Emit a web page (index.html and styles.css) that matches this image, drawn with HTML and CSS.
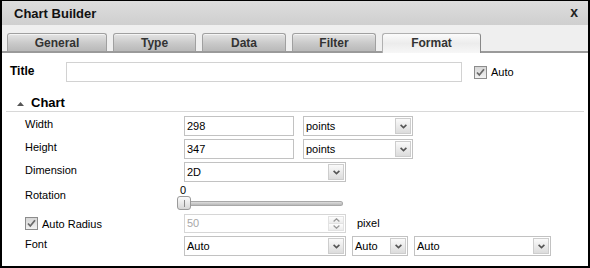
FILE: index.html
```html
<!DOCTYPE html>
<html>
<head>
<meta charset="utf-8">
<link rel="stylesheet" href="styles.css">
</head>
<body>
<div class="win">
  <div class="titlebar">
    <span class="ttl">Chart Builder</span>
    <span class="close">x</span>
  </div>
  <div class="tabs">
    <div class="tab t-general">General</div>
    <div class="tab t-type">Type</div>
    <div class="tab t-data">Data</div>
    <div class="tab t-filter">Filter</div>
    <div class="tab t-format active">Format</div>
  </div>
  <div class="content">
    <div class="title-row">
      <span class="lbl-b">Title</span>
      <div class="field title-input"></div>
      <span class="cb cb-title"><svg width="13" height="13" viewBox="0 0 13 13"><path d="M3 6.5 L5.3 9 L10 3.3" stroke="#6a6a6a" stroke-width="1.8" fill="none"/></svg></span>
      <span class="cb-text">Auto</span>
    </div>
    <div class="section">
      <svg class="tri" width="7" height="4" viewBox="0 0 7 4"><path d="M0 4 L3.5 0 L7 4 Z" fill="#555"/></svg>
      <span>Chart</span>
    </div>
    <div class="form">
      <div class="lbl">Width</div>
      <div class="ctl">
        <div class="field num">298</div>
        <div class="field sel w110">points<span class="arrow"><svg width="7" height="5" viewBox="0 0 7 5"><path d="M0.6 0.8 L3.5 3.6 L6.4 0.8" stroke="#555" stroke-width="1.6" fill="none"/></svg></span></div>
      </div>

      <div class="lbl">Height</div>
      <div class="ctl">
        <div class="field num">347</div>
        <div class="field sel w110">points<span class="arrow"><svg width="7" height="5" viewBox="0 0 7 5"><path d="M0.6 0.8 L3.5 3.6 L6.4 0.8" stroke="#555" stroke-width="1.6" fill="none"/></svg></span></div>
      </div>

      <div class="lbl">Dimension</div>
      <div class="ctl">
        <div class="field sel w162">2D<span class="arrow"><svg width="7" height="5" viewBox="0 0 7 5"><path d="M0.6 0.8 L3.5 3.6 L6.4 0.8" stroke="#555" stroke-width="1.6" fill="none"/></svg></span></div>
      </div>

      <div class="lbl lbl-rot">Rotation</div>
      <div class="slider">
        <div class="zero">0</div>
        <div class="track-row">
          <span class="thumb"><span class="grip"></span></span>
          <span class="track"></span>
        </div>
      </div>

      <div class="lbl lbl-cb">
        <span class="cb"><svg width="13" height="13" viewBox="0 0 13 13"><path d="M3 6.5 L5.3 9 L10 3.3" stroke="#6a6a6a" stroke-width="1.8" fill="none"/></svg></span>
        <span class="cb-text">Auto Radius</span>
      </div>
      <div class="ctl ctl-center">
        <div class="field spin w162">50<span class="spin-btns"><span class="sb"><svg width="7" height="4" viewBox="0 0 7 4"><path d="M0.6 3.4 L3.5 0.8 L6.4 3.4" stroke="#999" stroke-width="1.3" fill="none"/></svg></span><span class="sb"><svg width="7" height="4" viewBox="0 0 7 4"><path d="M0.6 0.6 L3.5 3.2 L6.4 0.6" stroke="#999" stroke-width="1.3" fill="none"/></svg></span></span></div>
        <span class="unit">pixel</span>
      </div>

      <div class="lbl">Font</div>
      <div class="ctl">
        <div class="field sel w162">Auto<span class="arrow"><svg width="7" height="5" viewBox="0 0 7 5"><path d="M0.6 0.8 L3.5 3.6 L6.4 0.8" stroke="#555" stroke-width="1.6" fill="none"/></svg></span></div>
        <div class="field sel w56">Auto<span class="arrow"><svg width="7" height="5" viewBox="0 0 7 5"><path d="M0.6 0.8 L3.5 3.6 L6.4 0.8" stroke="#555" stroke-width="1.6" fill="none"/></svg></span></div>
        <div class="field sel w137">Auto<span class="arrow"><svg width="7" height="5" viewBox="0 0 7 5"><path d="M0.6 0.8 L3.5 3.6 L6.4 0.8" stroke="#555" stroke-width="1.6" fill="none"/></svg></span></div>
      </div>
    </div>
  </div>
</div>
</body>
</html>
```

FILE: styles.css
```css
body {
  margin: 0;
  font-family: "Liberation Sans", Arial, sans-serif;
  font-size: 11px;
  color: #000;
  background: #fff;
}

.win {
  width: 590px;
  height: 268px;
  box-sizing: border-box;
  border: 2px solid #000;
  border-top: 1px solid #000;
  display: flex;
  flex-direction: column;
  background: #fff;
}

.titlebar {
  height: 24px;
  flex: none;
  display: flex;
  align-items: center;
  justify-content: space-between;
  padding: 0 10px 0 12px;
  background: linear-gradient(#dddddd, #cfcfcf);
}

.ttl {
  font-weight: bold;
  font-size: 13px;
  color: #111;
}

.close {
  font-weight: bold;
  font-size: 14px;
  color: #222;
  line-height: 14px;
  margin-top: -2px;
}

.tabs {
  height: 26px;
  flex: none;
  display: flex;
  align-items: flex-end;
  gap: 6px;
  padding-left: 5px;
  background: #efefef;
  border-bottom: 2px solid #9a9a9a;
}

.tab {
  height: 18px;
  box-sizing: border-box;
  border: 1px solid #a0a0a0;
  border-bottom: none;
  border-radius: 3px 3px 0 0;
  background: linear-gradient(#e4e4e4, #c9c9c9 55%, #b9b9b9);
  box-shadow: inset 0 1px 0 #f4f4f4;
  font-weight: bold;
  font-size: 12px;
  color: #333;
  display: flex;
  align-items: center;
  justify-content: center;
}

.t-general { width: 100px; }
.t-type { width: 83px; }
.t-data { width: 84px; }
.t-filter { width: 84px; }
.t-format { width: 99px; }

.tab.active {
  height: 20px;
  margin-bottom: -2px;
  border-color: #b0b0b0;
  border-right-color: #888;
  background: linear-gradient(#fbfbfb, #ececec 50%, #f7f7f7);
  box-shadow: none;
  padding-bottom: 2px;
}

.content {
  flex: 1;
  padding-top: 9px;
}

.title-row {
  display: flex;
  align-items: center;
  height: 20px;
  margin-left: 8px;
}

.lbl-b {
  width: 56px;
  font-weight: bold;
  font-size: 12px;
  margin-top: -2px;
}

.field {
  box-sizing: border-box;
  height: 20px;
  border: 1px solid #c2c2c2;
  background: #fff;
  display: flex;
  align-items: center;
  padding-left: 2px;
  position: relative;
}

.title-input {
  width: 396px;
  border-color: #d2d2d2;
}

.cb {
  width: 13px;
  height: 13px;
  box-sizing: border-box;
  border: 1px solid #8c8c8c;
  background: linear-gradient(#d6d6d6, #f2f2f2);
  display: inline-flex;
  flex: none;
}

.cb svg {
  margin: -1px;
}

.cb-title {
  margin-left: 12px;
}

.cb-text {
  margin-left: 4px;
}

.section {
  margin: 13px 4px 0 4px;
  padding-left: 11px;
  height: 17px;
  box-sizing: border-box;
  border-bottom: 1px solid #d8d8d8;
  display: flex;
  align-items: center;
  font-weight: bold;
  font-size: 13px;
  line-height: 16px;
}

.tri {
  margin-right: 7px;
  margin-top: 1px;
}

.form {
  margin-top: 4px;
  padding-left: 23px;
  display: grid;
  grid-template-columns: 159px auto;
  grid-template-rows: 20px 20px 20px 25px 20px 20px;
  row-gap: 3px;
  justify-content: start;
}

.lbl {
  line-height: 14px;
  padding-top: 1px;
}

.lbl-rot {
  padding-top: 3px;
}

.lbl-cb {
  display: flex;
  align-items: center;
  padding-top: 1px;
}

.ctl {
  display: flex;
  gap: 6px;
}

.ctl-center {
  align-items: center;
}

.num {
  width: 110px;
  margin-right: 3px;
}

.w110 { width: 110px; }
.w162 { width: 162px; }
.w56 { width: 56px; }
.w137 { width: 137px; }

.sel {
  justify-content: space-between;
  padding-right: 1px;
}

.arrow {
  width: 16px;
  height: 16px;
  box-sizing: border-box;
  border: 1px solid #cdcdcd;
  background: linear-gradient(#fafafa, #dcdcdc);
  display: flex;
  align-items: center;
  justify-content: center;
}

.slider {
  margin-left: -7px;
  display: flex;
  flex-direction: column;
}

.zero {
  line-height: 11px;
  padding-left: 3px;
}

.track-row {
  display: flex;
  align-items: center;
}

.thumb {
  width: 14px;
  height: 14px;
  box-sizing: border-box;
  border: 1px solid #9a9a9a;
  border-radius: 3px;
  background: linear-gradient(#fbfbfb, #d6d6d6);
  display: flex;
  align-items: center;
  justify-content: center;
}

.grip {
  width: 1px;
  height: 7px;
  background: #8a8a8a;
}

.track {
  width: 152px;
  height: 5px;
  box-sizing: border-box;
  border: 1px solid #a8a8a8;
  border-left: none;
  border-radius: 0 3px 3px 0;
  background: linear-gradient(#dedede, #b8b8b8);
}

.spin {
  height: 19px;
  color: #a8a8a8;
  border-color: #d6d6d6;
  justify-content: space-between;
  padding-right: 1px;
}

.spin-btns {
  width: 16px;
  height: 15px;
  display: flex;
  flex-direction: column;
}

.sb {
  flex: 1;
  display: flex;
  align-items: center;
  justify-content: center;
  background: linear-gradient(#fdfdfd, #ececec);
  border: 1px solid #e2e2e2;
}

.sb + .sb {
  border-top: none;
}

.unit {
  margin-left: 5px;
}
```
